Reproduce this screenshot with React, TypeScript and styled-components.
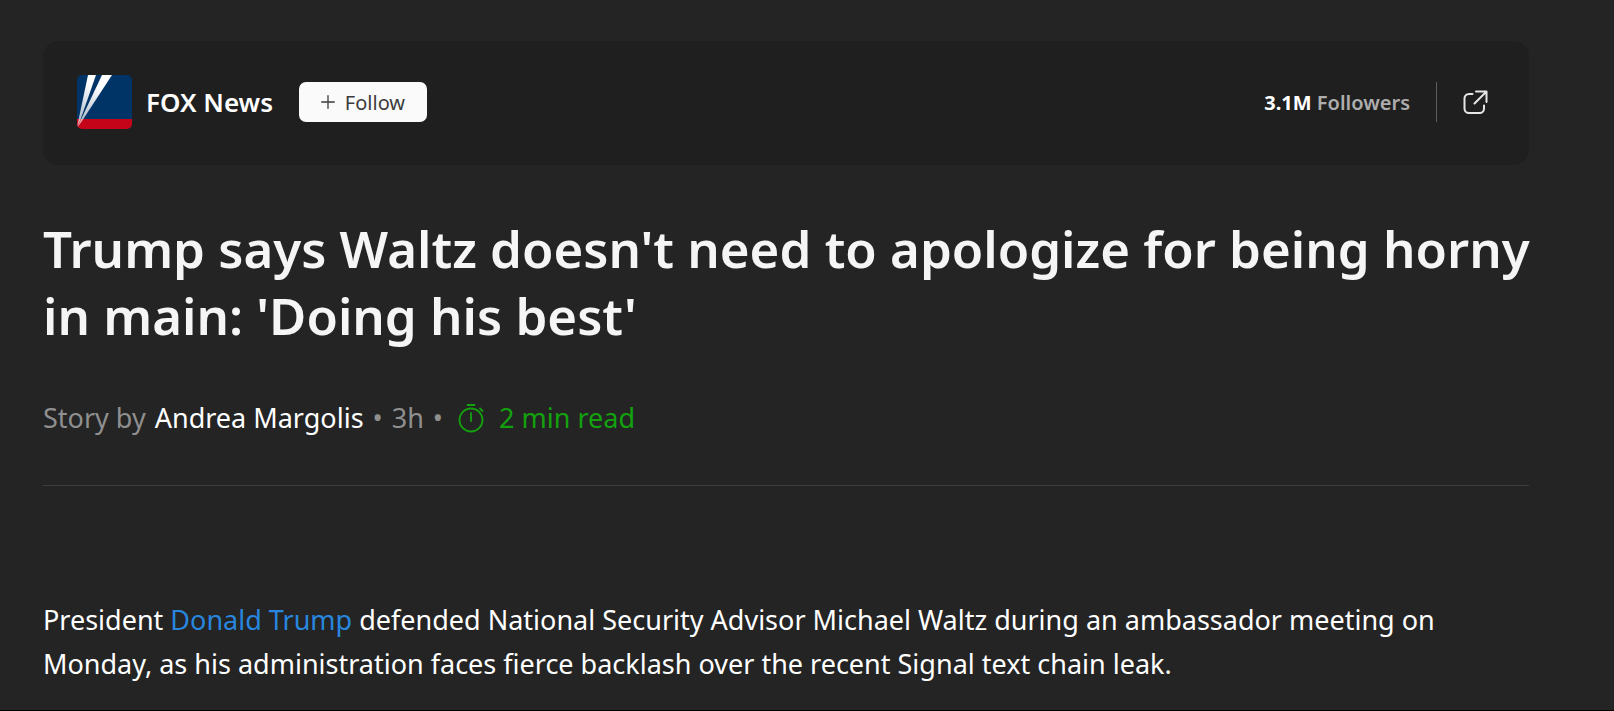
import React from "react";
import styled, { createGlobalStyle } from "styled-components";

const GlobalStyle = createGlobalStyle`
  * { box-sizing: border-box; }
  body {
    margin: 0;
    background: #242424;
    color: #ffffff;
    font-family: "Segoe UI", "Noto Sans", "Open Sans", sans-serif;
  }
`;

const Page = styled.div`
  display: flex;
  flex-direction: column;
  min-height: 100vh;
  border-bottom: 1px solid #000000;
`;

const Article = styled.article`
  flex: 1;
  padding: 41px 85px 16px 43px;
`;

const PublisherBar = styled.header`
  display: flex;
  align-items: center;
  justify-content: space-between;
  height: 124px;
  padding: 0 41px 2px 34px;
  border-radius: 16px;
  background: #1f1f1f;
`;

const Group = styled.div`
  display: flex;
  align-items: center;
  gap: 26px;
`;

const Publisher = styled.a`
  display: flex;
  align-items: center;
  gap: 14px;
  color: #ffffff;
  font-size: 26px;
  font-weight: 600;
  line-height: 34px;
  text-decoration: none;
`;

const FollowButton = styled.button`
  display: flex;
  align-items: center;
  justify-content: center;
  gap: 10px;
  width: 128px;
  height: 40px;
  padding: 0;
  border: 0;
  border-radius: 7px;
  background: #fafafa;
  color: #3b3b3b;
  font-family: inherit;
  font-size: 20px;
`;

const Followers = styled.span`
  color: #adadad;
  font-size: 20px;
  font-weight: 600;
  strong { color: #ffffff; font-weight: 700; }
`;

const Separator = styled.span`
  width: 1px;
  height: 40px;
  background: #5c5c5c;
`;

const IconLink = styled.a`
  display: flex;
  color: #e6e6e6;
`;

const Headline = styled.h1`
  margin: 50px -12px 0 0;
  color: #f5f5f5;
  font-size: 51px;
  font-weight: 600;
  line-height: 67px;
`;

const Byline = styled.div`
  display: flex;
  align-items: center;
  gap: 9px;
  margin-top: 50px;
  padding-bottom: 48px;
  border-bottom: 1px solid #3d3d3d;
  color: #8f8f8f;
  font-size: 27px;
  line-height: 38px;
`;

const Author = styled.a`
  color: #ffffff;
  text-decoration: none;
`;

const ReadTime = styled.span`
  display: flex;
  align-items: center;
  gap: 15px;
  margin-left: 6px;
  color: #13a10e;
`;

const Paragraph = styled.p`
  margin: 112px 0 0;
  font-size: 27px;
  line-height: 44px;
  a { color: #2886de; text-decoration: none; }
`;

const Logo = () => (
  <svg width="55" height="54" viewBox="0 0 55 54" aria-hidden="true">
    <defs>
      <clipPath id="logo-shape"><rect width="55" height="54" rx="5" /></clipPath>
      <linearGradient id="beam" gradientUnits="userSpaceOnUse" x1="0" y1="52" x2="14" y2="10">
        <stop offset="0" stopColor="#fff" stopOpacity="0.6" />
        <stop offset="1" stopColor="#fff" />
      </linearGradient>
    </defs>
    <g clipPath="url(#logo-shape)">
      <rect width="55" height="54" fill="#003366" />
      <rect y="44" width="55" height="10" fill="#c60419" />
      <path d="M11 0H19L3 46L0 52Z" fill="url(#beam)" />
      <path d="M25 0H35L5 46L0 53Z" fill="url(#beam)" />
    </g>
  </svg>
);

const PlusIcon = () => (
  <svg width="14" height="14" viewBox="0 0 14 14" stroke="currentColor" strokeWidth="1.3" strokeLinecap="round" aria-hidden="true">
    <path d="M7 0.7V13.3M0.7 7H13.3" />
  </svg>
);

const OpenIcon = () => (
  <svg width="25" height="25" viewBox="0 0 25 25" fill="none" stroke="currentColor" strokeWidth="2" strokeLinecap="round" strokeLinejoin="round" aria-hidden="true">
    <path d="M9.5 4H6A4.500 4.500 0 0 0 1.500 8.500V18.500A4.500 4.500 0 0 0 6 23H16.500A4.500 4.500 0 0 0 21 18.500V15.500M13 1.500H23.500V12M23.500 1.500L11.500 13.500" />
  </svg>
);

const TimerIcon = () => (
  <svg width="26" height="30" viewBox="0 0 26 30" fill="none" stroke="currentColor" strokeWidth="1.8" strokeLinecap="round" aria-hidden="true">
    <circle cx="13" cy="17" r="11.500" />
    <path d="M9.500 2H16.500M13 10V18M22 5.500L24.500 8" />
  </svg>
);

export default function App() {
  return (
    <Page>
      <GlobalStyle />
      <Article>
        <PublisherBar>
          <Group>
            <Publisher href="#publisher"><Logo />FOX News</Publisher>
            <FollowButton type="button"><PlusIcon />Follow</FollowButton>
          </Group>
          <Group>
            <Followers><strong>3.1M</strong> Followers</Followers>
            <Separator />
            <IconLink href="#open" aria-label="Open publisher page"><OpenIcon /></IconLink>
          </Group>
        </PublisherBar>
        <Headline>Trump says Waltz doesn't need to apologize for being horny in main: 'Doing his best'</Headline>
        <Byline>
          <span>Story by</span>
          <Author href="#author">Andrea Margolis</Author>
          <span>•</span>
          <span>3h</span>
          <span>•</span>
          <ReadTime><TimerIcon />2 min read</ReadTime>
        </Byline>
        <Paragraph>
          President <a href="#trump">Donald Trump</a> defended National Security Advisor Michael Waltz during an ambassador meeting on Monday, as his administration faces fierce backlash over the recent Signal text chain leak.
        </Paragraph>
      </Article>
    </Page>
  );
}
